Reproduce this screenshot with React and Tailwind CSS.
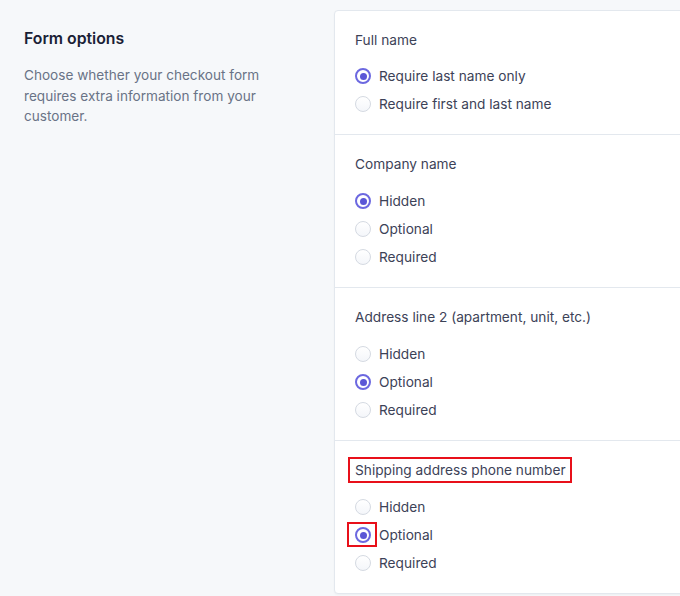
import React from "react";

function Radio({ checked, label, mark }) {
  return (
    <label className="flex h-7 items-center">
      <span className="relative flex h-4 w-4 shrink-0 items-center justify-center">
        {checked ? (
          <span className="flex h-4 w-4 items-center justify-center rounded-full border-2 border-[#6c68e0] bg-white">
            <span className="h-[7px] w-[7px] rounded-full bg-[#5b57d6]" />
          </span>
        ) : (
          <span className="h-4 w-4 rounded-full border border-[#d5dae2] bg-gradient-to-b from-white to-[#f4f6fa]" />
        )}
        {mark && (
          <span className="pointer-events-none absolute left-[-8px] top-[-5px] h-[25px] w-[30px] border-2 border-[#e8101a]" />
        )}
      </span>
      <span className="ml-2 text-[13.7px] text-[#3c4257]">{label}</span>
    </label>
  );
}

function Section({ title, options, selected, markTitle, markIndex, last, first }) {
  return (
    <div className={`px-5 pt-[19px] pb-4 ${last ? "" : "border-b border-[#e3e8ee]"}`}>
      <div className={`${first ? "mb-3" : "mb-[13px]"} flex h-5 items-center`}>
        <span className="relative text-[13.7px] leading-5 text-[#3c4257]">
          {title}
          {markTitle && (
            <span className="pointer-events-none absolute -left-[7px] -right-[6px] -top-[3px] -bottom-[3px] border-2 border-[#e8101a]" />
          )}
        </span>
      </div>
      {options.map((o, i) => (
        <Radio key={o} label={o} checked={i === selected} mark={i === markIndex} />
      ))}
    </div>
  );
}

export default function App() {
  return (
    <div
      className="flex h-[596px] w-[680px] overflow-hidden bg-[#f6f8fa]"
      style={{ fontFamily: "Inter, 'Noto Sans', sans-serif" }}
    >
      <div className="w-[334px] shrink-0 pl-6 pt-[29px]">
        <h2 className="text-[15.8px] font-semibold leading-5 text-[#1a1f36]">Form options</h2>
        <p className="mt-[16px] w-[250px] text-[13.6px] leading-[20.5px] text-[#697386]">
          Choose whether your checkout form requires extra information from your customer.
        </p>
      </div>
      <div className="mt-[10px] mb-[4px] w-[360px] shrink-0 self-start rounded border border-[#e3e8ee] bg-white shadow-[0_1px_2px_rgba(0,0,0,0.04)]">
        <Section
          title="Full name"
          options={["Require last name only", "Require first and last name"]}
          selected={0}
          first
        />
        <Section title="Company name" options={["Hidden", "Optional", "Required"]} selected={0} />
        <Section
          title="Address line 2 (apartment, unit, etc.)"
          options={["Hidden", "Optional", "Required"]}
          selected={1}
        />
        <Section
          title="Shipping address phone number"
          options={["Hidden", "Optional", "Required"]}
          selected={1}
          markTitle
          markIndex={1}
          last
        />
      </div>
    </div>
  );
}
